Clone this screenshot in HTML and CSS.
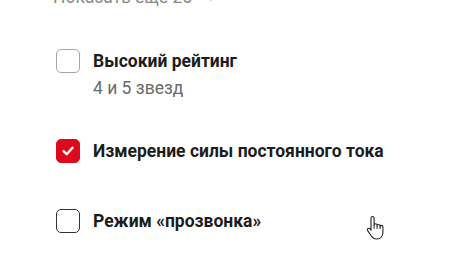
FILE: index.html
```html
<!DOCTYPE html>
<html lang="ru">
<head>
<meta charset="utf-8">
<link rel="stylesheet" href="styles.css">
</head>
<body>
<div class="panel">
  <button class="more">Показать ещё 25
    <svg class="chev" width="10" height="6" viewBox="0 0 10 6"><path d="M1 1l4 4 4-4" fill="none" stroke="#b0b0b0" stroke-width="1.5" stroke-linecap="round" stroke-linejoin="round"/></svg>
  </button>
  <ul class="list">
    <li class="item">
      <span class="box"></span>
      <div class="label">
        <div class="title">Высокий рейтинг</div>
        <div class="sub">4 и 5 звезд</div>
      </div>
    </li>
    <li class="item">
      <span class="box checked">
        <svg width="14" height="14" viewBox="0 0 14 14"><path d="M2.5 7.2 L5.7 10.2 L11.5 3.8" fill="none" stroke="#fff" stroke-width="2.4" stroke-linecap="round" stroke-linejoin="round"/></svg>
      </span>
      <div class="label"><div class="title">Измерение силы постоянного тока</div></div>
    </li>
    <li class="item">
      <span class="box hover"></span>
      <div class="label"><div class="title">Режим «прозвонка»</div></div>
    </li>
  </ul>
  <svg class="cursor" width="20" height="26" viewBox="0 0 20 26">
    <path d="M6.5 1.5c1 0 1.6.7 1.6 1.6v7.2c0-.9.7-1.5 1.5-1.5s1.5.6 1.5 1.5v.6c0-.9.7-1.4 1.5-1.4s1.5.6 1.5 1.4v.8c0-.8.7-1.3 1.4-1.3.8 0 1.4.6 1.4 1.4v5.6c0 3.6-2.3 6.6-6.3 6.6-2.6 0-4-1.1-5.300-3L1.7 15.6c-.5-.8-.3-1.700.4-2.1.7-.4 1.5-.2 2 .5l.9 1.3V3.1c0-.9.6-1.6 1.5-1.6z" fill="#fff" stroke="#222" stroke-width="1.1" stroke-linejoin="round"/>
    <path d="M8.1 10.300v3.5M11.1 10.9v3M14.1 11.5v2.5" stroke="#222" stroke-width="1" fill="none"/>
  </svg>
</div>
</body>
</html>
```
FILE: styles.css
```css
* { box-sizing: border-box; }
html, body { margin: 0; padding: 0; background: #fff; }
body { font-family: Roboto, "Noto Sans", sans-serif; color: #222; width: 454px; height: 277px; overflow: hidden; }
.panel { position: relative; padding: 0 0 0 56px; height: 277px; }
.more {
  display: flex; align-items: center; gap: 14px;
  margin: -13px 0 0 -3px; padding: 0; border: 0; background: none;
  font: 17.5px/20px Roboto, sans-serif; color: #8a8a8a;
}
.chev { margin-top: 2px; }
.list { list-style: none; margin: 42px 0 0; padding: 0; display: flex; flex-direction: column; gap: 39px; }
.list .item + .item + .item { margin-top: 7px; }
.item { display: flex; align-items: flex-start; gap: 13px; }
.box {
  flex: none; width: 24px; height: 24px; border-radius: 5px;
  border: 1px solid #a6a6a6; display: flex; align-items: center; justify-content: center;
}
.box.checked { background: #dd0a1e; border-color: #dd0a1e; }
.box.hover { border-color: #333; }
.label { display: flex; flex-direction: column; }
.title { font-weight: 700; font-size: 17.5px; line-height: 24px; color: #1c1c1c; }
.sub { font-size: 17.5px; line-height: 24px; color: #6a6a6a; margin-top: 3px; }
.cursor { position: absolute; left: 366px; top: 228px; }
```
